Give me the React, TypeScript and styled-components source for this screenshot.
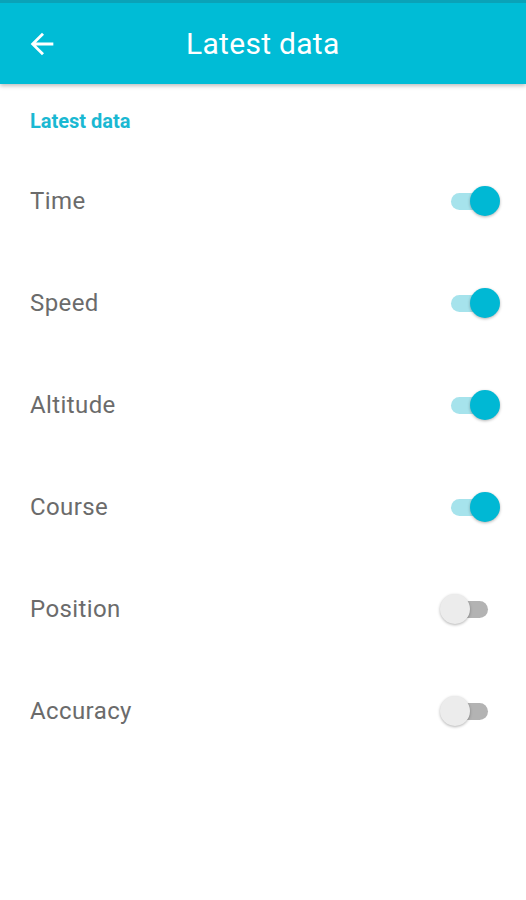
import React, { useState } from "react";
import styled, { createGlobalStyle } from "styled-components";

const GlobalStyle = createGlobalStyle`
  html, body {
    margin: 0;
    padding: 0;
    background: #ffffff;
    font-family: Roboto, "Noto Sans", sans-serif;
  }
`;

const settings = [
  { label: "Time", on: true },
  { label: "Speed", on: true },
  { label: "Altitude", on: true },
  { label: "Course", on: true },
  { label: "Position", on: false },
  { label: "Accuracy", on: false },
];

const App: React.FC = () => {
  const [values, setValues] = useState(settings.map((s) => s.on));

  const toggle = (idx: number) => {
    setValues((v) => v.map((x, i) => (i === idx ? !x : x)));
  };

  return (
    <Page>
      <GlobalStyle />
      <TopBar>
        <BackButton aria-label="back">
          <svg width="34" height="34" viewBox="0 0 24 24">
            <path
              d="M20 11H7.83l5.59-5.59L12 4l-8 8 8 8 1.41-1.41L7.83 13H20v-2z"
              fill="#ffffff"
            />
          </svg>
        </BackButton>
        <Title>Latest data</Title>
      </TopBar>
      <Content>
        <SectionTitle>Latest data</SectionTitle>
        {settings.map((s, idx) => (
          <Row key={s.label} onClick={() => toggle(idx)}>
            <Label>{s.label}</Label>
            <Switch $on={values[idx]}>
              <Thumb $on={values[idx]} />
            </Switch>
          </Row>
        ))}
      </Content>
    </Page>
  );
};

export default App;

const Page = styled.div`
  width: 526px;
  min-height: 900px;
  background: #ffffff;
`;

const TopBar = styled.div`
  height: 84px;
  box-sizing: border-box;
  border-top: 3px solid #0aa2b8;
  background: #00bcd6;
  display: flex;
  align-items: center;
  padding: 0 0 0 25px;
  box-shadow: 0 2px 4px rgba(0, 0, 0, 0.25);
  position: relative;
`;

const BackButton = styled.div`
  width: 34px;
  height: 34px;
  display: flex;
  align-items: center;
  justify-content: center;
`;

const Title = styled.div`
  color: #ffffff;
  font-size: 30px;
  letter-spacing: 0.3px;
  margin-left: 127px;
  margin-top: -1px;
`;

const Content = styled.div`
  display: flex;
  flex-direction: column;
`;

const SectionTitle = styled.div`
  color: #1ab8d2;
  font-size: 20px;
  font-weight: 700;
  line-height: 24px;
  padding: 25px 30px 0;
  margin-bottom: 17px;
`;

const Row = styled.div`
  height: 102px;
  display: flex;
  align-items: center;
  justify-content: space-between;
  padding: 0 26px 0 30px;
  cursor: pointer;
`;

const Label = styled.div`
  font-size: 24px;
  letter-spacing: 0.4px;
  color: #6b6b6b;
`;

const Switch = styled.div<{ $on: boolean }>`
  position: relative;
  width: 37px;
  height: 17px;
  border-radius: 9px;
  margin-right: 12px;
  background: ${(p) => (p.$on ? "#a6e3ec" : "#b3b3b3")};
`;

const Thumb = styled.div<{ $on: boolean }>`
  position: absolute;
  top: -7px;
  left: ${(p) => (p.$on ? "19px" : "-11px")};
  width: 30px;
  height: 30px;
  border-radius: 50%;
  background: ${(p) => (p.$on ? "#00b8d4" : "#ececec")};
  box-shadow: 0 1px 3px rgba(0, 0, 0, 0.3);
`;
